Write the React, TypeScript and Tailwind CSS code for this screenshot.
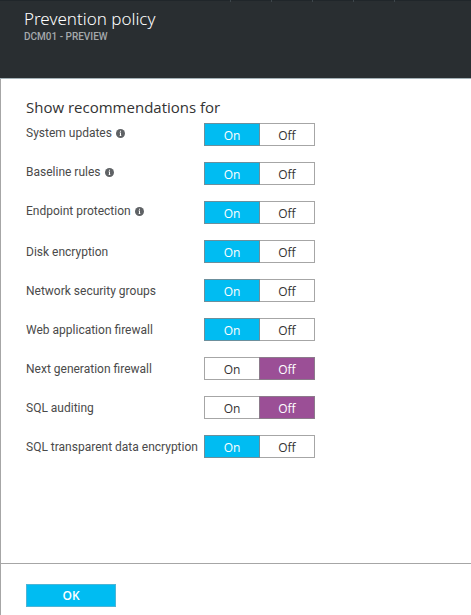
import React, { useState } from "react";

type Policy = {
    id: string
    label: string
    info?: boolean
    enabled: boolean
}

const defaultPolicies: Policy[] = [
    { id: "updates", label: "System updates", info: true, enabled: true },
    { id: "baseline", label: "Baseline rules", info: true, enabled: true },
    { id: "endpoint", label: "Endpoint protection", info: true, enabled: true },
    { id: "disk", label: "Disk encryption", enabled: true },
    { id: "nsg", label: "Network security groups", enabled: true },
    { id: "waf", label: "Web application firewall", enabled: true },
    { id: "ngfw", label: "Next generation firewall", enabled: false },
    { id: "auditing", label: "SQL auditing", enabled: false },
    { id: "tde", label: "SQL transparent data encryption", enabled: true },
]

const InfoIcon = () => (
    <svg viewBox="0 0 9 9" className="h-[9px] w-[9px] shrink-0" aria-hidden="true">
        <circle cx="4.5" cy="4.5" r="4.5" fill="#5f6265" />
        <path d="M4 1.7h1v1.1H4zM3.6 3.6H5v2.9h.5v.6h-2v-.6H4V4.2h-.4z" fill="#fff" />
    </svg>
)

const Toggle = ({ policy, onChange }: { policy: Policy; onChange: (enabled: boolean) => void }) => {
    const { id, enabled } = policy
    return (
        <div
            role="group"
            aria-labelledby={id}
            className="flex h-[23px] shrink-0 text-[12px] leading-5"
        >
            <button
                type="button"
                aria-pressed={enabled}
                onClick={() => onChange(true)}
                className={`w-14 border pt-0.5 ${enabled ? "relative border-[#6b8f9c] bg-[#00bcf2] text-white" : "border-[#a6a6a6] bg-white text-[#333]"}`}
            >
                On
            </button>
            <button
                type="button"
                aria-pressed={!enabled}
                onClick={() => onChange(false)}
                className={`-ml-px w-14 border pt-0.5 ${enabled ? "border-[#a6a6a6] bg-white text-[#333]" : "relative border-[#8c7a8b] bg-[#9b4f96] text-white"}`}
            >
                Off
            </button>
        </div>
    )
}

const App = () => {
    const [policies, setPolicies] = useState(defaultPolicies)

    const setEnabled = (id: string, enabled: boolean) => {
        setPolicies((prev) => prev.map((p) => (p.id === id ? { ...p, enabled } : p)))
    }

    return (
        <div className="flex min-h-screen w-full flex-col border-l border-[#a6a6a6] bg-white font-['Open_Sans','Noto_Sans',sans-serif] text-[#4a4a4a]">
            <header className="relative -ml-px h-[79px] border-t border-b border-t-[#20262a] border-b-[#a3b1b6] bg-[#292e31] px-6 pt-1.5">
                {/* edges of the command buttons tucked under the top of the blade */}
                <div className="absolute -top-px left-[230px] flex gap-10" aria-hidden="true">
                    <span className="h-0.5 w-px bg-[#3d464b]" />
                    <span className="h-0.5 w-px bg-[#3d464b]" />
                    <span className="h-0.5 w-px bg-[#3d464b]" />
                    <span className="h-0.5 w-px bg-[#3d464b]" />
                    <span className="h-0.5 w-px bg-[#3d464b]" />
                </div>
                <h1 className="font-['Noto_Sans',sans-serif] text-[17px] leading-6 font-light text-white">Prevention policy</h1>
                <p className="font-['Roboto',sans-serif] text-[10px] leading-3 font-medium text-[#a5a9ac]">DCM01 - PREVIEW</p>
            </header>
            <form className="flex flex-1 flex-col" onSubmit={(e) => e.preventDefault()}>
                <div className="flex-1 px-[25px] pt-4">
                    <h2 className="text-[15px] leading-6 text-[#333]">Show recommendations for</h2>
                    <div className="mt-1 space-y-4">
                        {policies.map((policy) => (
                            <div key={policy.id} className="flex items-center">
                                <div className={`flex w-[178px] items-center gap-1 font-['Roboto',sans-serif] text-[12px] leading-4 whitespace-nowrap ${policy.info ? "pb-[3px]" : ""}`}>
                                    <span id={policy.id}>{policy.label}</span>
                                    {policy.info && <InfoIcon />}
                                </div>
                                <Toggle policy={policy} onChange={(enabled) => setEnabled(policy.id, enabled)} />
                            </div>
                        ))}
                    </div>
                </div>
                <footer className="border-t border-[#a6a6a6] px-[25px] pt-5 pb-2">
                    <button
                        type="submit"
                        className="block h-[23px] w-[90px] border border-[#4db5d6] bg-[#00bcf2] text-[12px] leading-5 font-semibold text-white"
                    >
                        OK
                    </button>
                </footer>
            </form>
        </div>
    );
}

export default App;
